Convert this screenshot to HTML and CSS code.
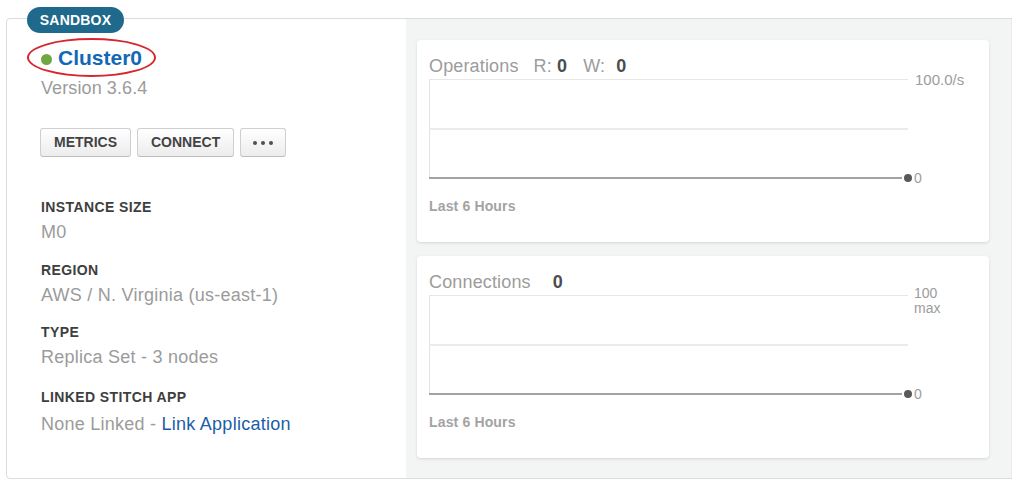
FILE: index.html
```html
<!DOCTYPE html>
<html lang="en">
<head>
<meta charset="utf-8">
<title>Cluster0</title>
<link rel="stylesheet" href="styles.css">
</head>
<body>
<div class="page">
  <div class="cluster">
    <span class="badge">SANDBOX</span>
    <section class="info">
      <span class="highlight"></span>
      <h1 class="name"><span class="status"></span>Cluster0</h1>
      <div class="version">Version 3.6.4</div>
      <div class="actions">
        <button class="btn">METRICS</button>
        <button class="btn">CONNECT</button>
        <button class="btn more"><i></i><i></i><i></i></button>
      </div>
      <dl class="fields">
        <div class="field"><dt>INSTANCE SIZE</dt><dd>M0</dd></div>
        <div class="field"><dt>REGION</dt><dd>AWS / N. Virginia (us-east-1)</dd></div>
        <div class="field"><dt>TYPE</dt><dd>Replica Set - 3 nodes</dd></div>
        <div class="field"><dt>LINKED STITCH APP</dt><dd>None Linked - <a class="link" href="#">Link Application</a></dd></div>
      </dl>
    </section>
    <section class="metrics">
      <div class="col">
        <div class="chart-card">
          <div class="chart-title">Operations<span class="stat">R: <b>0</b></span><span class="stat stat-w">W: <b>0</b></span></div>
          <svg class="plot" width="560" height="106" viewBox="0 0 560 106">
            <line x1="0" y1="2.5" x2="479" y2="2.5" stroke="#e6e6e6"/>
            <line x1="0.5" y1="2" x2="0.5" y2="100" stroke="#e3e3e3"/>
            <rect x="0" y="51" width="479" height="2" fill="#ebebeb"/>
            <rect x="0" y="100" width="473" height="2" fill="#a2a2a2"/>
            <circle cx="479" cy="101" r="4" fill="#58595b"/>
            <text class="axis" x="485" y="106">0</text>
            <text class="axis big" x="486" y="8">100.0/s</text>
          </svg>
          <div class="chart-foot">Last 6 Hours</div>
        </div>
        <div class="chart-card">
          <div class="chart-title">Connections<span class="stat stat-c"><b>0</b></span></div>
          <svg class="plot" width="560" height="106" viewBox="0 0 560 106">
            <line x1="0" y1="2.5" x2="479" y2="2.5" stroke="#e6e6e6"/>
            <line x1="0.5" y1="2" x2="0.5" y2="100" stroke="#e3e3e3"/>
            <rect x="0" y="51" width="479" height="2" fill="#ebebeb"/>
            <rect x="0" y="100" width="473" height="2" fill="#a2a2a2"/>
            <circle cx="479" cy="101" r="4" fill="#58595b"/>
            <text class="axis" x="485" y="106">0</text>
            <text class="axis" x="485" y="5">100</text>
            <text class="axis" x="485" y="20">max</text>
          </svg>
          <div class="chart-foot">Last 6 Hours</div>
        </div>
      </div>
      <div class="col ghost">
        <div class="ghost-box"></div>
      </div>
    </section>
  </div>
</div>
</body>
</html>
```
FILE: styles.css
```css
html, body {
  margin: 0;
  padding: 0;
}
body {
  width: 1012px;
  height: 490px;
  overflow: hidden;
  background: #fff;
  font-family: "Liberation Sans", Arial, sans-serif;
}
.page {
  padding: 18px 0 0 6px;
}
.cluster {
  position: relative;
  display: flex;
  width: 1200px;
  height: 461px;
  box-sizing: border-box;
  border: 1px solid #dcdcdc;
  border-radius: 4px;
}
.badge {
  position: absolute;
  left: 20px;
  top: -12px;
  width: 97px;
  height: 26px;
  line-height: 26px;
  border-radius: 13px;
  background: #1f698c;
  color: #fff;
  font-size: 14px;
  font-weight: bold;
  text-align: center;
  letter-spacing: 0.2px;
  z-index: 2;
}
.info {
  position: relative;
  flex: none;
  width: 399px;
  box-sizing: border-box;
  padding: 26px 0 0 34px;
  border-radius: 4px 0 0 4px;
}
.highlight {
  position: absolute;
  left: 20px;
  top: 19px;
  width: 129px;
  height: 39px;
  box-sizing: border-box;
  border: 2px solid #d6262c;
  border-radius: 50%;
}
.name {
  margin: 0;
  font-size: 21px;
  line-height: 26px;
  font-weight: bold;
  color: #1268b5;
}
.status {
  display: inline-block;
  width: 11px;
  height: 11px;
  border-radius: 50%;
  background: #6fa843;
  margin-right: 6px;
}
.version {
  margin-top: 6px;
  font-size: 18px;
  line-height: 22px;
  color: #9b9b9b;
  letter-spacing: 0.1px;
}
.actions {
  display: flex;
  gap: 6px;
  margin-top: 29px;
  margin-left: -1px;
}
.btn {
  height: 29px;
  box-sizing: border-box;
  padding: 0 13px;
  border: 1px solid #cfcfcf;
  border-bottom-color: #bdbdbd;
  border-radius: 3px;
  background: linear-gradient(#ffffff, #ececec);
  font-family: inherit;
  font-size: 14px;
  font-weight: bold;
  color: #434343;
  line-height: 27px;
}
.more {
  display: flex;
  align-items: center;
  justify-content: center;
  gap: 4px;
  width: 46px;
  padding: 0;
}
.more i {
  width: 4px;
  height: 4px;
  border-radius: 50%;
  background: #4f4f4f;
}
.fields {
  margin: 41px 0 0;
}
.field + .field {
  margin-top: 16px;
}
.field:nth-child(2) {
  margin-top: 17px;
}
.field:nth-child(4) {
  margin-top: 19px;
}
.field dt {
  font-size: 14px;
  line-height: 18px;
  font-weight: bold;
  color: #3e3e3e;
  letter-spacing: 0.4px;
  margin-bottom: 4px;
}
.field dd {
  margin: 0;
  font-size: 18px;
  line-height: 24px;
  color: #9b9b9b;
  letter-spacing: 0.25px;
}
.field:last-child dt {
  margin-bottom: 6px;
}
.link {
  color: #1a5ea8;
  text-decoration: none;
}
.metrics {
  flex: 1;
  display: flex;
  gap: 22px;
  padding: 21px 0 0 11px;
  background: #f3f4f4;
}
.col {
  display: flex;
  flex-direction: column;
  gap: 14px;
}
.chart-card {
  width: 572px;
  height: 202px;
  box-sizing: border-box;
  padding: 15px 0 0 12px;
  background: #fff;
  border-radius: 4px;
  box-shadow: 0 1px 3px rgba(0, 0, 0, 0.13);
}
.chart-title {
  font-size: 18px;
  line-height: 22px;
  color: #9c9c9c;
  white-space: nowrap;
  letter-spacing: 0.15px;
}
.chart-title b {
  font-weight: bold;
  color: #4b4d4f;
}
.stat {
  margin-left: 15px;
}
.stat-w {
  margin-left: 16px;
}
.stat-w b {
  margin-left: 6px;
}
.stat-c {
  margin-left: 22px;
}
.plot {
  display: block;
  overflow: visible;
}
.axis {
  font-family: "Liberation Sans", Arial, sans-serif;
  font-size: 14px;
  fill: #9c9c9c;
}
.axis.big {
  font-size: 15px;
}
.chart-foot {
  margin-top: 14px;
  font-size: 14px;
  line-height: 18px;
  font-weight: bold;
  color: #a3a3a3;
  letter-spacing: 0.15px;
}
.ghost {
  width: 200px;
  margin-top: -21px;
  padding-top: 237px;
  background: #f6f7f7;
  border-left: 1px solid #ebebeb;
}
.ghost-box {
  height: 201px;
  border-left: 1px dashed #cccccc;
}
```
